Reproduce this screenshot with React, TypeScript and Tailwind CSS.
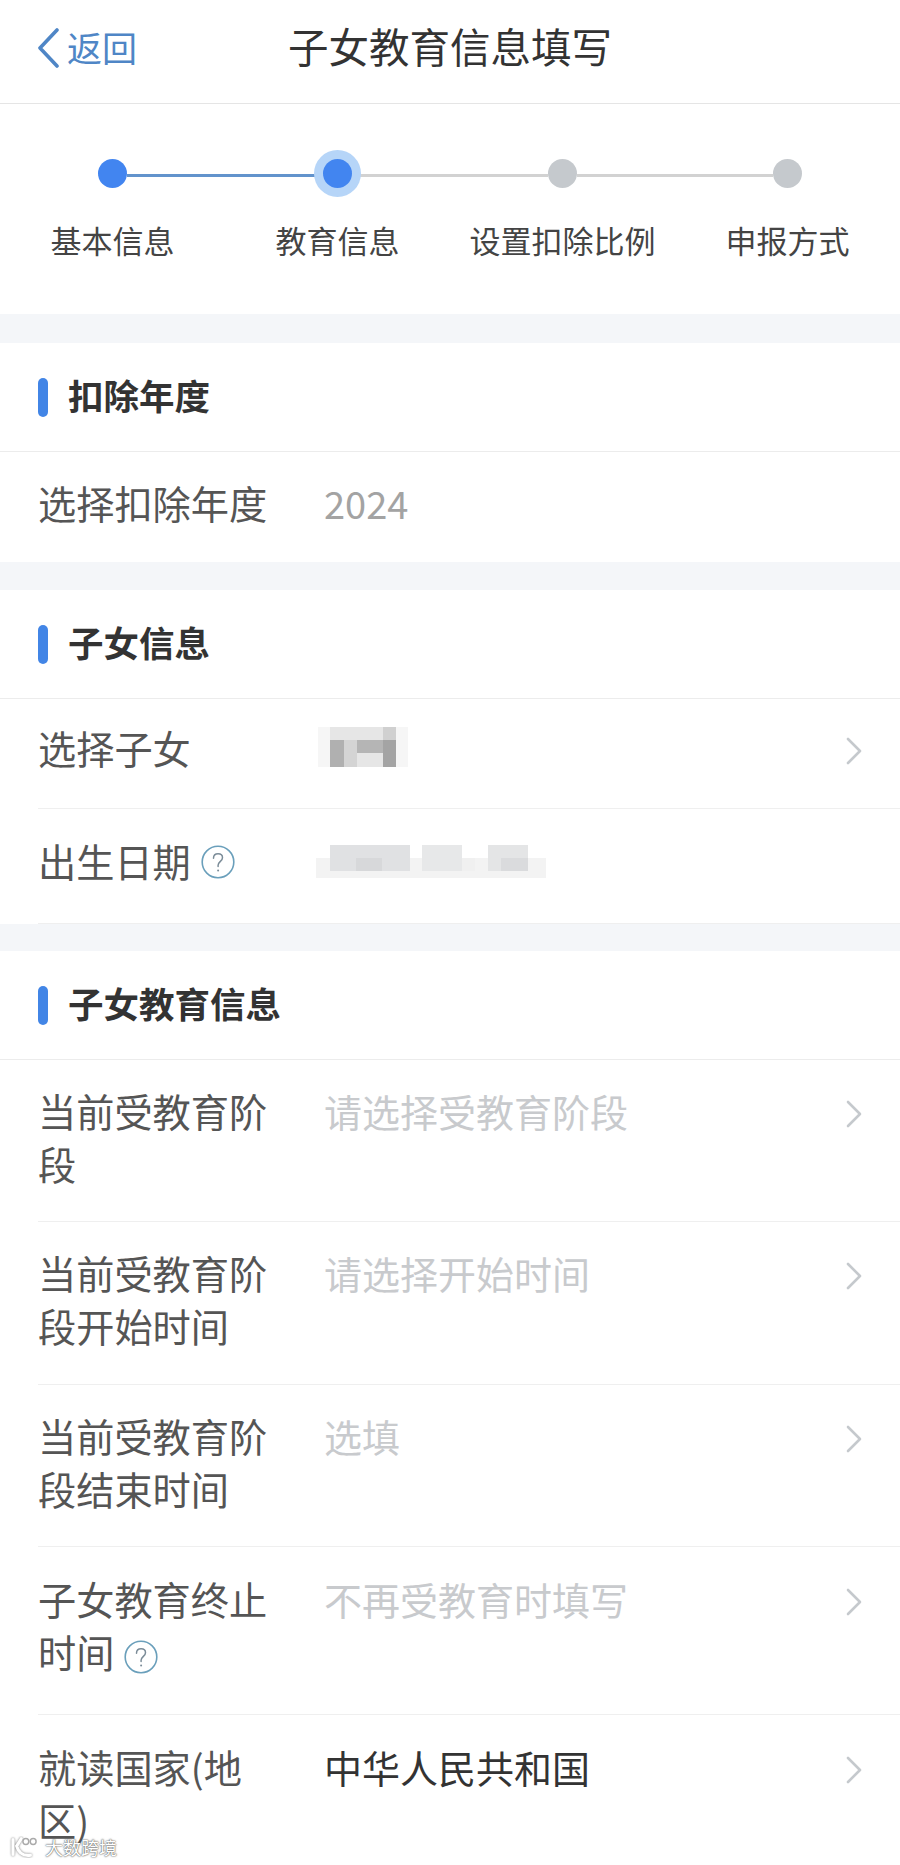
import type { ReactNode } from 'react';

const font = { fontFamily: '"Noto Sans CJK SC", "Noto Sans", sans-serif' };

const steps = [
  { label: '基本信息', state: 'done' },
  { label: '教育信息', state: 'current' },
  { label: '设置扣除比例', state: 'todo' },
  { label: '申报方式', state: 'todo' },
];

function HelpIcon({ className }: { className?: string }) {
  return (
    <svg viewBox="0 0 34 34" className={className} fill="none">
      <circle cx="17" cy="17" r="15.8" stroke="#6a9fbb" strokeWidth="1.6" />
      <path
        d="M12.5 13.2c0-2.7 2-4.4 4.6-4.4 2.5 0 4.4 1.6 4.4 3.9 0 3.4-4.4 3.9-4.4 7.6v1.2"
        stroke="#7b8c98"
        strokeWidth="1.5"
        strokeLinecap="round"
      />
      <circle cx="17.1" cy="25.6" r="1" fill="#7b8c98" />
    </svg>
  );
}

function ChevronRight() {
  return (
    <svg viewBox="0 0 18 28" className="h-[28px] w-[18px] shrink-0" fill="none">
      <path d="M3 2l12 12L3 26" stroke="#c5c9cd" strokeWidth="2.6" strokeLinecap="round" strokeLinejoin="round" />
    </svg>
  );
}

function SectionTitle({ children }: { children: ReactNode }) {
  return (
    <div className="flex h-[109px] items-center border-b border-[#ececec] pl-[38px]">
      <span className="h-[39px] w-[10px] rounded-[5px] bg-[#4285e6]" />
      <h2 className="mb-[5px] ml-[20px] text-[35.5px] leading-none font-bold text-[#333333]">{children}</h2>
    </div>
  );
}

function Row({
  label,
  value,
  tone = 'placeholder',
  arrow = true,
  className = '',
}: {
  label: ReactNode;
  value?: ReactNode;
  tone?: 'placeholder' | 'muted' | 'dark';
  arrow?: boolean;
  className?: string;
}) {
  return (
    <div className="pl-[38px]">
      <div className={`flex items-start border-b border-[#efefef] pr-[37px] ${className}`}>
        <div className="w-[286px] shrink-0 pr-[48px] text-[38.2px] leading-[53px] text-[#555555]">{label}</div>
        <div
          className={`flex-1 text-[38px] leading-[53px] ${
            tone === 'dark' ? 'text-[#333333]' : tone === 'muted' ? 'text-[#a3a3a3]' : 'text-[#c8cacd]'
          }`}
        >
          {value}
        </div>
        {arrow && (
          <div className="mt-[3px] flex h-[53px] items-center">
            <ChevronRight />
          </div>
        )}
      </div>
    </div>
  );
}

function NameMosaic() {
  return (
    <svg viewBox="0 0 100 50" className="mt-[6px] -ml-[12px] h-[50px] w-[100px] blur-[0.5px]">
      <rect x="6" y="0" width="90" height="40" fill="#f6f6f6" />
      <rect x="18" y="0" width="66" height="40" fill="#e6e6e6" />
      <rect x="18" y="13" width="14" height="27" fill="#b0b0b0" />
      <rect x="32" y="13" width="13" height="27" fill="#d4d4d4" />
      <rect x="45" y="13" width="26" height="13" fill="#b5b5b5" />
      <rect x="71" y="0" width="13" height="13" fill="#d0d0d0" />
      <rect x="71" y="13" width="13" height="27" fill="#a4a4a4" />
    </svg>
  );
}

function DateMosaic() {
  return (
    <svg viewBox="0 0 240 40" className="mt-[10px] -ml-[8px] h-[40px] w-[240px] blur-[0.5px]">
      <rect x="0" y="14" width="230" height="20" fill="#f3f3f3" />
      <rect x="14" y="1" width="80" height="26" fill="#e0e1e3" />
      <rect x="40" y="14" width="26" height="13" fill="#d7d8da" />
      <rect x="106" y="1" width="40" height="26" fill="#e7e8e9" />
      <rect x="146" y="14" width="13" height="13" fill="#f0f0f0" />
      <rect x="172" y="1" width="40" height="26" fill="#e4e5e6" />
      <rect x="185" y="14" width="27" height="13" fill="#dadbdd" />
    </svg>
  );
}

function Watermark() {
  return (
    <div className="absolute bottom-[7px] left-[8px] flex items-center gap-[5px]">
      <svg viewBox="0 0 32 24" className="h-[22px] w-[32px]" fill="none">
        <path
          d="M4 4v16M13 3L8 11c2 7 7 11 15 10"
          stroke="#ffffff"
          strokeWidth="3.4"
          strokeLinecap="round"
          style={{ filter: 'drop-shadow(0 0 1px #777777)' }}
        />
        <circle cx="18" cy="6" r="3.2" stroke="#aaaaaa" strokeWidth="1.6" />
        <circle cx="26" cy="6" r="3.2" stroke="#aaaaaa" strokeWidth="1.6" />
      </svg>
      <span className="text-[18px] leading-none text-white [text-shadow:0_0_2px_#555555,0_0_1px_#555555]">大数跨境</span>
    </div>
  );
}

export default function App() {
  return (
    <div className="relative h-[1865px] w-[900px] overflow-hidden bg-white" style={font}>
      {/* nav bar */}
      <div className="grid h-[104px] grid-cols-[1fr_auto_1fr] items-center border-b border-[#e5e5e5] pb-[7px]">
        <div className="flex items-center pl-[37px]">
          <svg viewBox="0 0 22 40" className="h-[40px] w-[22px]" fill="none">
            <path d="M20 2L3 20l17 18" stroke="#4f86c6" strokeWidth="3.6" strokeLinecap="round" strokeLinejoin="round" />
          </svg>
          <span className="mb-[3px] ml-[8px] text-[35px] leading-none text-[#4f86c6]">返回</span>
        </div>
        <h1 className="mb-[3px] text-[40.5px] leading-none font-normal text-[#333333]">子女教育信息填写</h1>
        <div />
      </div>

      {/* steps */}
      <div className="h-[210px] pt-[55px]">
        <div className="grid grid-cols-4">
          {steps.map((step, i) => (
            <div key={step.label} className="flex flex-col items-center">
              <div className="flex h-[29px] w-full items-center">
                <span
                  className={`mt-[3px] h-[3px] flex-1 ${
                    i === 0 ? 'bg-transparent' : i === 1 ? 'bg-[#6293cc]' : 'bg-[#d2d2d2]'
                  }`}
                />
                <span
                  className={`z-10 h-[29px] w-[29px] rounded-full ${
                    step.state === 'todo' ? 'bg-[#c5c9cd]' : 'bg-[#4285f0]'
                  } ${step.state === 'current' ? 'ring-[9px] ring-[#b6d5f8]' : ''}`}
                />
                <span
                  className={`mt-[3px] h-[3px] flex-1 ${
                    i === 3 ? 'bg-transparent' : i === 0 ? 'bg-[#6293cc]' : 'bg-[#d2d2d2]'
                  }`}
                />
              </div>
              <span className="mt-[32px] text-[31px] leading-[40px] text-[#444444]">{step.label}</span>
            </div>
          ))}
        </div>
      </div>

      <div className="h-[29px] bg-[#f4f6f9]" />
      <SectionTitle>扣除年度</SectionTitle>
      <div className="flex h-[110px] items-start pt-[24px] pl-[38px]">
        <div className="w-[286px] text-[38.2px] leading-[53px] text-[#555555]">选择扣除年度</div>
        <div className="text-[38px] leading-[53px] text-[#a3a3a3]">2024</div>
      </div>

      <div className="h-[28px] bg-[#f4f6f9]" />
      <SectionTitle>子女信息</SectionTitle>
      <Row label="选择子女" value={<NameMosaic />} className="h-[110px] pt-[22px]" />
      <Row
        label={
          <span className="flex items-center">
            出生日期
            <HelpIcon className="mt-[3px] ml-[10px] h-[34px] w-[34px]" />
          </span>
        }
        value={<DateMosaic />}
        arrow={false}
        className="h-[115px] pt-[25px]"
      />

      <div className="h-[27px] bg-[#f4f6f9]" />
      <SectionTitle>子女教育信息</SectionTitle>
      <Row label="当前受教育阶段" value="请选择受教育阶段" className="h-[162px] pt-[24px]" />
      <Row label="当前受教育阶段开始时间" value="请选择开始时间" className="h-[163px] pt-[24px]" />
      <Row label="当前受教育阶段结束时间" value="选填" className="h-[162px] pt-[24px]" />
      <Row
        label={
          <>
            子女教育终止时间
            <HelpIcon className="ml-[10px] inline-block h-[34px] w-[34px] align-[-6px]" />
          </>
        }
        value="不再受教育时填写"
        className="h-[168px] pt-[25px]"
      />
      <Row label="就读国家(地区)" value="中华人民共和国" tone="dark" className="h-[160px] pt-[25px]" />

      <Watermark />
    </div>
  );
}
